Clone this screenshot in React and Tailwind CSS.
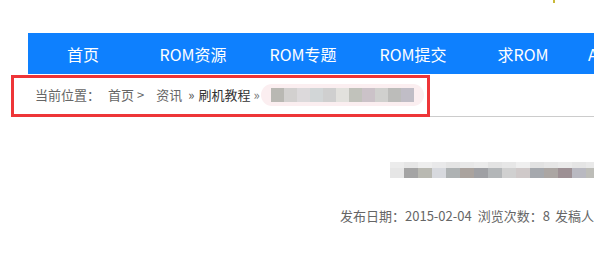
import React from "react";

const navItems = ["首页", "ROM资源", "ROM专题", "ROM提交", "求ROM", "APP下载"];

// pixelated (mosaic) blocks standing in for a blurred title
const crumbBlocks = ["#b9b8b3", "#d2d0cf", "#dcd9db", "#d2d6d7", "#cfcfcf", "#e2e1dd", "#c1c2bb", "#cbc2c8", "#d0d0ce", "#bcbcba", "#c0bdc6"];
const titleTop = ["#ececec", "#e6e6e6", "#eeeeee", "#e9e9ea", "#e4e4e4", "#e8e8e8", "#ebebeb", "#e3e3e3", "#e7e7e7", "#efefef", "#e2e2e2", "#e6e6e6", "#eaeaea", "#e5e5e5", "#e9e9e9"];
const titleBottom = ["#e6e6e6", "#a4a4a4", "#b9b9b2", "#d7d9de", "#aeb2b3", "#aaa39e", "#9fa0a4", "#b3b6b8", "#d0d0d0", "#cfc9c9", "#a5a8ad", "#aba6a3", "#9d9094", "#b9b9c1", "#bdbdb8"];

export default function App() {
  return (
    <div
      className="relative w-[594px] h-[260px] overflow-hidden bg-white"
      style={{ fontFamily: '"Microsoft YaHei", "Noto Sans CJK SC", "Noto Sans", sans-serif' }}
    >
      {/* stray pixel in the top right corner */}
      <div className="absolute left-[553px] top-0 w-[2px] h-[3px] bg-[#c9b93a]" />

      {/* top spacer */}
      <div className="h-[33px]" />

      {/* main nav */}
      <div className="ml-[28px] h-[41px] bg-[#0e80fe] overflow-hidden">
        <ul className="flex h-full whitespace-nowrap">
          {navItems.map((item, i) => (
            <li
              key={item}
              className={`w-[110px] shrink-0 flex items-center text-white text-[16px] ${i === 5 ? "justify-start pl-[10px]" : "justify-center"}`}
            >
              {item}
            </li>
          ))}
        </ul>
      </div>

      {/* breadcrumb */}
      <div className="ml-[28px] h-[43px] border-b border-[#cccccc] flex items-center text-[13px] text-[#666] whitespace-nowrap">
        <span className="ml-[7px]">当前位置：</span>
        <span className="ml-[8px]">首页 &gt;</span>
        <span className="ml-[12px]">资讯</span>
        <span className="ml-[6px] text-[#555]">»</span>
        <span className="ml-[4px] text-[#333]">刷机教程</span>
        <span className="ml-[3px] text-[#777]">»</span>
        <div className="ml-[1px] h-[22px] w-[163px] rounded-full bg-[#fbeef0] flex items-center pl-[10px]">
          <div className="flex h-[14px] blur-[0.4px]">
            {crumbBlocks.map((c, i) => (
              <div key={i} className="w-[13px] h-full" style={{ background: c }} />
            ))}
          </div>
        </div>
      </div>

      {/* blurred article title */}
      <div className="mt-[45px] ml-[390px] flex flex-col blur-[0.5px]">
        <div className="flex h-[6px]">
          {titleTop.map((c, i) => (
            <div key={i} className="w-[14px] h-full shrink-0" style={{ background: c }} />
          ))}
        </div>
        <div className="flex h-[10px]">
          {titleBottom.map((c, i) => (
            <div key={i} className="w-[14px] h-full shrink-0" style={{ background: c }} />
          ))}
        </div>
      </div>

      {/* meta line */}
      <div className="mt-[28px] ml-[340px] flex text-[13px] text-[#666] whitespace-nowrap">
        <span>发布日期：2015-02-04</span>
        <span className="ml-[6px]">浏览次数：8</span>
        <span className="ml-[5px]">发稿人：</span>
      </div>

      {/* red highlight frame drawn over the breadcrumb */}
      <div className="absolute left-[11px] top-[75px] w-[419px] h-[42px] border-[3px] border-[#ee3538] pointer-events-none" />
    </div>
  );
}
